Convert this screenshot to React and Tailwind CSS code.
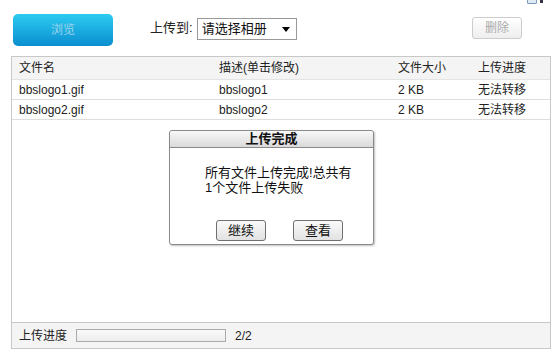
import React from 'react';

const rows = [
  { name: 'bbslogo1.gif', desc: 'bbslogo1', size: '2 KB', status: '无法转移' },
  { name: 'bbslogo2.gif', desc: 'bbslogo2', size: '2 KB', status: '无法转移' },
];

export default function App() {
  return (
    <div
      className="relative w-[553px] h-[354px] bg-white text-[12px] text-[#222] overflow-hidden"
      style={{ fontFamily: '"Liberation Sans", "Noto Sans CJK SC", sans-serif' }}
    >
      {/* corner icon */}
      <div className="absolute left-[527px] -top-[6px] w-[10px] h-[10px] border border-[#7a9ab8] bg-[#dfe9f4] rounded-[1px]" />
      <div className="absolute left-[540px] top-0 w-[3px] h-[3px] bg-[#334]" />

      {/* toolbar */}
      <div className="flex items-center h-[56px] pl-[13px] pr-[31px]">
        <button className="w-[100px] h-[32px] mt-[3px] rounded-[5px] bg-gradient-to-b from-[#2ccbf0] to-[#0a8ed0] text-[#9fd3ea] text-[12px]">
          浏览
        </button>
        <span className="ml-[37px] text-[13px] text-[#222]">上传到:</span>
        <div className="ml-[4px] mt-[2px] flex items-center justify-between w-[100px] h-[22px] border border-[#999] bg-white pl-[4px] pr-[6px]">
          <span className="text-[13px] text-[#111]">请选择相册</span>
          <span className="w-0 h-0 border-l-[4px] border-r-[4px] border-t-[5px] border-l-transparent border-r-transparent border-t-black" />
        </div>
        <button className="ml-auto w-[50px] h-[22px] border border-[#ccc] rounded-[3px] bg-gradient-to-b from-white to-[#eee] text-[#aaa] text-[12px]">
          删除
        </button>
      </div>

      {/* panel */}
      <div className="ml-[11px] w-[540px] h-[293px] border border-[#c8c8c8] flex flex-col">
        <div className="flex items-center h-[23px] bg-[#f4f4f4] border-b border-[#e4e4e4]">
          <span className="w-[200px] pl-[7px]">文件名</span>
          <span className="w-[179px] pl-[7px]">描述(单击修改)</span>
          <span className="w-[80px] pl-[7px]">文件大小</span>
          <span className="pl-[7px]">上传进度</span>
        </div>
        {rows.map((r) => (
          <div key={r.name} className="flex items-center h-[20px] border-b border-[#dedede]">
            <span className="w-[200px] pl-[7px]">{r.name}</span>
            <span className="w-[179px] pl-[7px]">{r.desc}</span>
            <span className="w-[80px] pl-[7px]">{r.size}</span>
            <span className="pl-[7px]">{r.status}</span>
          </div>
        ))}

        <div className="flex-1 relative">
          {/* dialog */}
          <div className="absolute left-[157px] top-[10px] w-[205px] h-[115px] border border-[#8a8a8a] rounded-[3px] bg-white shadow-[1px_1px_2px_rgba(0,0,0,0.25)] flex flex-col">
            <div className="h-[17px] flex items-center justify-center bg-gradient-to-b from-[#f8f8f8] to-[#dadada] border-b border-[#8a8a8a] rounded-t-[3px]">
              <span className="font-bold text-[13px] text-[#111]">上传完成</span>
            </div>
            <div className="pl-[35px] pt-[17px] text-[13px] leading-[15px] text-[#111]">
              <div>所有文件上传完成!总共有</div>
              <div>1个文件上传失败</div>
            </div>
            <div className="mt-auto mb-[3px] flex pl-[46px] gap-[27px]">
              <button className="w-[50px] h-[21px] border border-[#707070] rounded-[3px] bg-gradient-to-b from-[#fafafa] to-[#e2e2e2] text-[13px] text-[#111]">
                继续
              </button>
              <button className="w-[50px] h-[21px] border border-[#707070] rounded-[3px] bg-gradient-to-b from-[#fafafa] to-[#e2e2e2] text-[13px] text-[#111]">
                查看
              </button>
            </div>
          </div>
        </div>

        <div className="flex items-center h-[26px] bg-[#f4f4f4] border-t border-[#c8c8c8]">
          <span className="pl-[7px]">上传进度</span>
          <div className="ml-[9px] w-[150px] h-[13px] border border-[#aaa] bg-gradient-to-b from-[#fafafa] to-[#ececec]" />
          <span className="ml-[9px]">2/2</span>
        </div>
      </div>
    </div>
  );
}
